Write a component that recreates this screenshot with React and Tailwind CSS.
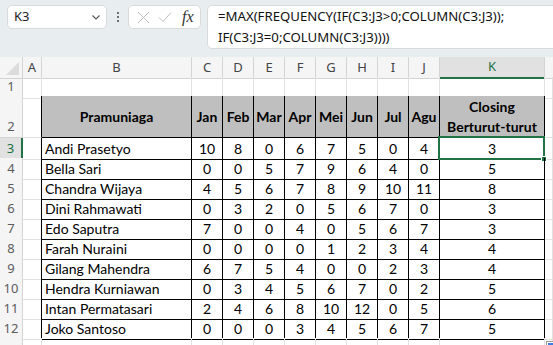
import React from "react";

const rows = [
  ["Andi Prasetyo", [10, 8, 0, 6, 7, 5, 0, 4], 3],
  ["Bella Sari", [0, 0, 5, 7, 9, 6, 4, 0], 5],
  ["Chandra Wijaya", [4, 5, 6, 7, 8, 9, 10, 11], 8],
  ["Dini Rahmawati", [0, 3, 2, 0, 5, 6, 7, 0], 3],
  ["Edo Saputra", [7, 0, 0, 4, 0, 5, 6, 7], 3],
  ["Farah Nuraini", [0, 0, 0, 0, 1, 2, 3, 4], 4],
  ["Gilang Mahendra", [6, 7, 5, 4, 0, 0, 2, 3], 4],
  ["Hendra Kurniawan", [0, 3, 4, 5, 6, 7, 0, 2], 5],
  ["Intan Permatasari", [2, 4, 6, 8, 10, 12, 0, 5], 6],
  ["Joko Santoso", [0, 0, 0, 3, 4, 5, 6, 7], 5],
];
const months = ["Jan", "Feb", "Mar", "Apr", "Mei", "Jun", "Jul", "Agu"];
const cols = ["A", "B", "C", "D", "E", "F", "G", "H", "I", "J", "K"];

const grid = "grid grid-cols-[23px_19px_150px_31px_31px_31px_31px_31px_31px_31px_31px_105px_1fr]";
const gl = "border-r border-b border-[#e1e1e1]";
const bl = "border-r border-b border-black";
const rh = "bg-[#f5f5f5] border-r border-b border-[#d4d4d4] text-[#5c5c5c] text-[13px] flex justify-center items-end pb-[1px] font-['Noto_Sans',sans-serif]";
const cellFont = "font-['Lato',sans-serif] text-[14px] text-black";
const hdrFont = "font-['Lato',sans-serif] text-[14px] text-black font-bold";

export default function App() {
  return (
    <div className="w-[553px] h-[345px] overflow-hidden bg-white">
      {/* formula bar */}
      <div className="h-[57px] bg-[#e8eeef] flex items-start pt-[5px] pl-[7px] font-['Noto_Sans',sans-serif]">
        <div className="w-[100px] h-[24px] bg-white border border-[#dadada] rounded-[5px] flex items-center justify-between pl-[6px] pr-[5px] text-[13px] text-[#222]">
          <span>K3</span>
          <svg width="10" height="7" viewBox="0 0 10 7"><path d="M1.5 1.5 L5 5 L8.5 1.5" fill="none" stroke="#555" strokeWidth="1.1" /></svg>
        </div>
        <div className="w-[21px] h-[24px] flex flex-col items-center justify-center gap-[2px]">
          <div className="w-[2px] h-[2px] bg-[#444] rounded-full" />
          <div className="w-[2px] h-[2px] bg-[#444] rounded-full" />
          <div className="w-[2px] h-[2px] bg-[#444] rounded-full" />
        </div>
        <div className="w-[73px] h-[24px] bg-white border border-[#dadada] rounded-[5px] flex items-center pl-[8px] gap-[8px]">
          <svg width="13" height="13" viewBox="0 0 13 13"><path d="M1 1 L12 12 M12 1 L1 12" stroke="#bdbdbd" strokeWidth="1" /></svg>
          <svg width="14" height="12" viewBox="0 0 14 12"><path d="M1 6.5 L5 10.5 L13 1.5" fill="none" stroke="#bdbdbd" strokeWidth="1" /></svg>
          <span className="font-['Liberation_Serif',serif] italic text-[16px] text-[#333] ml-[2px] leading-none">fx</span>
        </div>
        <div className="ml-[6px] flex-1 mr-[-10px] h-[44px] bg-white border border-[#dadada] rounded-l-[5px] pl-[10px] pt-[0px] text-[13.2px] leading-[21px] text-[#111] font-['Noto_Sans',sans-serif]">
          <div>=MAX(FREQUENCY(IF(C3:J3&gt;0;COLUMN(C3:J3));</div>
          <div>IF(C3:J3=0;COLUMN(C3:J3))))</div>
        </div>
      </div>

      {/* column headers */}
      <div className={grid + " h-[20px]"}>
        <div className="bg-[#f5f5f5] border-r border-b border-[#d4d4d4] relative">
          <div className="absolute right-[3px] bottom-[3px] w-0 h-0 border-l-[13px] border-l-transparent border-b-[13px] border-b-[#dcdcdc]" />
        </div>
        {cols.map((c) =>
          c === "K" ? (
            <div key={c} className="bg-[#e1e1e1] border-r border-[#d4d4d4] border-b-2 border-b-[#217346] text-[#217346] text-[13px] flex items-center justify-center font-['Noto_Sans',sans-serif]">{c}</div>
          ) : (
            <div key={c} className="bg-[#f5f5f5] border-r border-b border-[#d4d4d4] text-[#444] text-[13px] flex items-center justify-center font-['Noto_Sans',sans-serif]">{c}</div>
          )
        )}
        <div className="bg-[#f5f5f5] border-b border-[#d4d4d4]" />
      </div>

      {/* row 1 */}
      <div className={grid + " h-[19px]"}>
        <div className={rh}>1</div>
        <div className={gl} />
        {Array.from({ length: 10 }).map((_, i) => (
          <div key={i} className="border-r border-r-[#e1e1e1] border-b border-b-black" />
        ))}
        <div className={gl} />
      </div>

      {/* row 2 headers */}
      <div className={grid + " h-[42px]"}>
        <div className={rh}>2</div>
        <div className="border-r border-r-black border-b border-b-[#e1e1e1]" />
        <div className={bl + " bg-[#bfbfbf] flex items-center justify-center " + hdrFont}>Pramuniaga</div>
        {months.map((m) => (
          <div key={m} className={bl + " bg-[#bfbfbf] flex items-center justify-center whitespace-nowrap " + hdrFont}>{m}</div>
        ))}
        <div className={bl + " bg-[#bfbfbf] flex flex-col items-center justify-center leading-[20px] " + hdrFont}>
          <span>Closing</span>
          <span>Berturut-turut</span>
        </div>
        <div className={gl} />
      </div>

      {/* data rows */}
      {rows.map(([name, vals, k], ri) => (
        <div key={name} className={grid + " h-[20px]"}>
          {ri === 0 ? (
            <div className="bg-[#e1e1e1] border-r-2 border-r-[#217346] border-b border-[#d4d4d4] text-[#217346] text-[13px] flex justify-center items-end pb-[1px] font-['Noto_Sans',sans-serif]">3</div>
          ) : (
            <div className={rh}>{ri + 3}</div>
          )}
          <div className="border-r border-r-black border-b border-b-[#e1e1e1]" />
          <div className={bl + " flex items-center pl-[3px] " + cellFont}>{name}</div>
          {vals.map((v, i) => (
            <div key={i} className={bl + " flex items-center justify-center " + cellFont}>{v}</div>
          ))}
          <div className={bl + " relative flex items-center justify-center " + cellFont}>
            {k}
            {ri === 0 && (
              <div className="absolute -left-[2px] -top-[2px] -right-[1px] -bottom-[1px] border-2 border-[#217346]">
                <div className="absolute -right-[4px] -bottom-[4px] w-[6px] h-[6px] bg-[#217346] border border-white" />
              </div>
            )}
          </div>
          <div className={gl} />
        </div>
      ))}

      {/* row 13 partial */}
      <div className={grid + " h-[20px] relative"}>
        <div className="bg-[#f5f5f5] border-r border-[#d4d4d4]" />
        <div className="border-r border-[#e1e1e1]" />
        {Array.from({ length: 10 }).map((_, i) => (
          <div key={i} className="border-r border-[#e1e1e1]" />
        ))}
        <div className="border-r border-[#e1e1e1]" />
        <div className="absolute left-[546px] top-[3px] w-[10px] h-[10px] border border-[#9a9a9a] bg-white">
          <div className="m-[1px] w-[5px] h-[3px] bg-[#3b7ddd]" />
        </div>
      </div>
    </div>
  );
}
